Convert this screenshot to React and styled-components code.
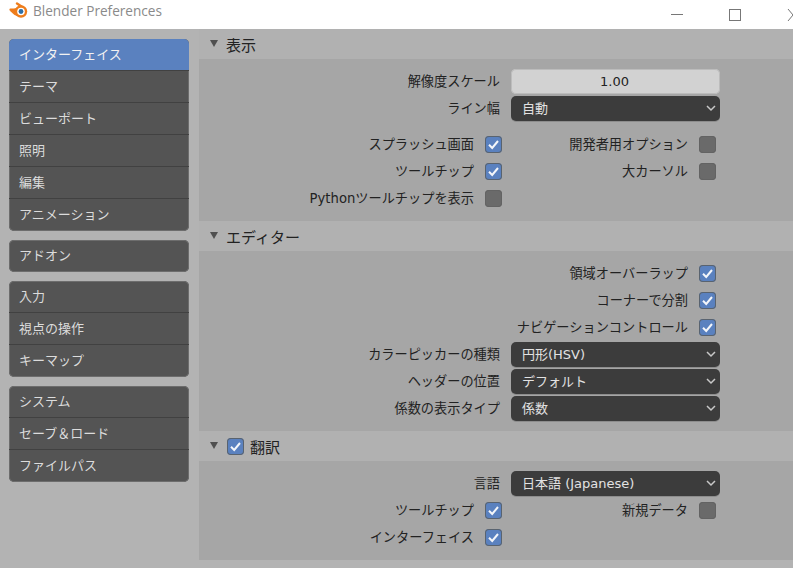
import React from "react";
import styled, { createGlobalStyle } from "styled-components";

const uiFont = `"DejaVu Sans", "Noto Sans CJK JP", sans-serif`;

const GlobalStyle = createGlobalStyle`
  html, body {
    margin: 0;
    padding: 0;
    height: 100%;
    overflow: hidden;
    background: #b3b3b3;
  }
  * { box-sizing: border-box; }
`;

const Page = styled.div`
  width: 793px;
  height: 568px;
  display: flex;
  flex-direction: column;
  overflow: hidden;
  font-family: ${uiFont};
`;

const TitleBar = styled.div`
  height: 29px;
  flex: none;
  background: #fff;
  display: flex;
  align-items: center;
  padding: 0 0 8px 9px;
`;

const AppTitle = styled.span`
  margin-left: 5px;
  font-family: "Open Sans", "Noto Sans", sans-serif;
  font-size: 13.6px;
  color: #8a8a8a;
  flex: 1;
`;

const WindowControls = styled.div`
  display: flex;
  align-items: center;
  width: 122px;
  height: 20px;
  margin-top: 8px;
  color: #777;
`;

const Body = styled.div`
  flex: 1;
  display: flex;
  min-height: 0;
`;

const Sidebar = styled.nav`
  width: 199px;
  flex: none;
  padding: 10px 10px 0 9px;
  display: flex;
  flex-direction: column;
  gap: 9px;
`;

const NavGroup = styled.div`
  border-radius: 5px;
  overflow: hidden;
  background: #545454;
  box-shadow: inset 0 0 0 1px #6d6d6d;
`;

const NavItem = styled.div`
  height: 32px;
  padding: 0 10px 3px;
  display: flex;
  align-items: center;
  font-size: 13px;
  color: ${(p) => (p.$active ? "#f2f2f2" : "#dcdcdc")};
  background: ${(p) => (p.$active ? "#5a81bf" : "transparent")};
  border-bottom: 1px solid #414141;
  &:last-child { border-bottom: 0; }
`;

const Main = styled.main`
  flex: 1;
  min-width: 0;
  display: flex;
  flex-direction: column;
`;

const SectionHeader = styled.div`
  height: 30px;
  display: flex;
  align-items: center;
  padding: 0 0 0 11px;
  background: #b1b1b1;
  font-size: 15px;
  color: #222;
`;

const Triangle = styled.span`
  width: 0;
  height: 0;
  margin: 0 8px 2px 0;
  border-left: 4px solid transparent;
  border-right: 4px solid transparent;
  border-top: 7px solid #4f4f4f;
`;

const HeaderCheck = styled.span`
  margin: 0 6px 0 1px;
  display: flex;
`;

const Panel = styled.div`
  padding: 9px 0;
  background: #a6a6a6;
`;

const Group = styled.div`
  margin-top: ${(p) => (p.$spaced ? "9px" : "0")};
`;

const FieldRow = styled.div`
  height: 27px;
  display: grid;
  grid-template-columns: 301px 209px;
  column-gap: 11px;
  align-items: center;
`;

const Label = styled.span`
  font-size: 13.2px;
  padding-bottom: 2px;
  color: #222;
  text-align: right;
  white-space: nowrap;
`;

const NumberField = styled.div`
  height: 25px;
  padding: 0 2px 1px 0;
  border-radius: 5px;
  background: #d2d2d2;
  box-shadow: inset 0 0 0 1px #bcbcbc;
  display: flex;
  align-items: center;
  justify-content: center;
  font-size: 13px;
  color: #222;
`;

const SelectBox = styled.div`
  height: 25px;
  border-radius: 5px;
  background: #3c3c3c;
  box-shadow: 0 1px 0 #8d8d8d;
  display: flex;
  align-items: center;
  justify-content: space-between;
  padding: 0 4px 2px 11px;
  font-size: 13px;
  color: #e2e2e2;
`;

const CheckRow = styled.div`
  height: 27px;
  display: grid;
  grid-template-columns: 303px 214px;
  align-items: center;
`;

const CheckCell = styled.div`
  grid-column: ${(p) => p.$col};
  display: flex;
  justify-content: flex-end;
  align-items: center;
  gap: 11px;
`;

const Box = styled.span`
  width: 17px;
  height: 17px;
  flex: none;
  display: flex;
  align-items: center;
  justify-content: center;
  border-radius: 4px;
  background: ${(p) => (p.$on ? "#5a81bf" : "#6a6a6a")};
  box-shadow: inset 0 0 0 1px ${(p) => (p.$on ? "#59636f" : "#636363")};
`;

const BlenderLogo = () => (
  <svg width="19" height="17" viewBox="0 0 19 17">
    <path d="M0.5 8.5 L9 5.5 L8 14 L5.5 13 Z" fill="#ee7d1c" />
    <path d="M8 1.5 L14 5.5" stroke="#ee7d1c" strokeWidth="2.4" strokeLinecap="round" />
    <path d="M1.5 7.5 L9 7.5" stroke="#ee7d1c" strokeWidth="2.2" strokeLinecap="round" />
    <circle cx="12" cy="9.5" r="6.2" fill="#ee7d1c" />
    <circle cx="12" cy="9.5" r="3.8" fill="#fff" />
    <circle cx="12" cy="9.5" r="2.4" fill="#2d6ea6" />
  </svg>
);

const WindowButtons = () => (
  <svg width="122" height="20" viewBox="0 0 122 20" fill="none" stroke="#777" strokeWidth="1">
    <path d="M0 9.5 H12" />
    <rect x="58.5" y="4.5" width="11" height="11" />
    <path d="M117 4 L122 10 L117 16" />
  </svg>
);

const Check = ({ on }) => (
  <Box $on={on}>
    {on && (
      <svg width="13" height="13" viewBox="0 0 13 13" fill="none" stroke="#f4f6fa" strokeWidth="2">
        <path d="M2 6.8 L5.2 10 L11 3" />
      </svg>
    )}
  </Box>
);

const Chevron = () => (
  <svg width="10" height="10" viewBox="0 0 10 10" fill="none" stroke="#c8c8c8" strokeWidth="1.5">
    <path d="M1 3 L5 7 L9 3" />
  </svg>
);

const Select = ({ label, value }) => (
  <FieldRow>
    <Label>{label}</Label>
    <SelectBox>
      {value}
      <Chevron />
    </SelectBox>
  </FieldRow>
);

const CheckItem = ({ label, on, col = 1 }) => (
  <CheckCell $col={col}>
    <Label>{label}</Label>
    <Check on={on} />
  </CheckCell>
);

const navGroups = [
  ["インターフェイス", "テーマ", "ビューポート", "照明", "編集", "アニメーション"],
  ["アドオン"],
  ["入力", "視点の操作", "キーマップ"],
  ["システム", "セーブ＆ロード", "ファイルパス"],
];

export default function App() {
  return (
    <Page>
      <GlobalStyle />
      <TitleBar>
        <BlenderLogo />
        <AppTitle>Blender Preferences</AppTitle>
        <WindowControls>
          <WindowButtons />
        </WindowControls>
      </TitleBar>
      <Body>
        <Sidebar>
          {navGroups.map((items) => (
            <NavGroup key={items[0]}>
              {items.map((item) => (
                <NavItem key={item} $active={item === "インターフェイス"}>
                  {item}
                </NavItem>
              ))}
            </NavGroup>
          ))}
        </Sidebar>
        <Main>
          <SectionHeader>
            <Triangle />
            表示
          </SectionHeader>
          <Panel>
            <FieldRow>
              <Label>解像度スケール</Label>
              <NumberField>1.00</NumberField>
            </FieldRow>
            <Select label="ライン幅" value="自動" />
            <Group $spaced>
              <CheckRow>
                <CheckItem label="スプラッシュ画面" on />
                <CheckItem label="開発者用オプション" col={2} />
              </CheckRow>
              <CheckRow>
                <CheckItem label="ツールチップ" on />
                <CheckItem label="大カーソル" col={2} />
              </CheckRow>
              <CheckRow>
                <CheckItem label="Pythonツールチップを表示" />
              </CheckRow>
            </Group>
          </Panel>

          <SectionHeader>
            <Triangle />
            エディター
          </SectionHeader>
          <Panel>
            <CheckRow>
              <CheckItem label="領域オーバーラップ" on col={2} />
            </CheckRow>
            <CheckRow>
              <CheckItem label="コーナーで分割" on col={2} />
            </CheckRow>
            <CheckRow>
              <CheckItem label="ナビゲーションコントロール" on col={2} />
            </CheckRow>
            <Select label="カラーピッカーの種類" value="円形(HSV)" />
            <Select label="ヘッダーの位置" value="デフォルト" />
            <Select label="係数の表示タイプ" value="係数" />
          </Panel>

          <SectionHeader>
            <Triangle />
            <HeaderCheck>
              <Check on />
            </HeaderCheck>
            翻訳
          </SectionHeader>
          <Panel>
            <Select label="言語" value="日本語 (Japanese)" />
            <CheckRow>
              <CheckItem label="ツールチップ" on />
              <CheckItem label="新規データ" col={2} />
            </CheckRow>
            <CheckRow>
              <CheckItem label="インターフェイス" on />
            </CheckRow>
          </Panel>
        </Main>
      </Body>
    </Page>
  );
}
